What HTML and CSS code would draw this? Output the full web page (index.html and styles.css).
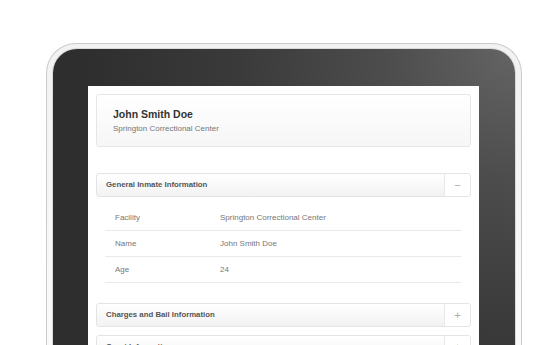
FILE: index.html
```html
<!DOCTYPE html>
<html>
<head>
    <title>Inmate Details</title>
    <link rel="stylesheet" href="styles.css">
</head>
<body>
  <div class="device">
    <div class="bezel">
      <div class="screen">
        <div class="profile">
          <h1 class="profile-name">John Smith Doe</h1>
          <p class="profile-facility">Springton Correctional Center</p>
        </div>

        <div class="panel">
          <div class="panel-head">
            <span class="panel-title">General Inmate Information</span>
            <span class="panel-toggle">&minus;</span>
          </div>
          <div class="panel-body">
            <table class="info-table">
              <tr><td class="label">Facility</td><td>Springton Correctional Center</td></tr>
              <tr><td class="label">Name</td><td>John Smith Doe</td></tr>
              <tr><td class="label">Age</td><td>24</td></tr>
            </table>
          </div>
        </div>

        <div class="panel">
          <div class="panel-head">
            <span class="panel-title">Charges and Bail Information</span>
            <span class="panel-toggle">+</span>
          </div>
        </div>

        <div class="panel">
          <div class="panel-head">
            <span class="panel-title">Court Information</span>
            <span class="panel-toggle">+</span>
          </div>
        </div>
      </div>
    </div>
  </div>
</body>
</html>
```

FILE: styles.css
```css
body {
    margin: 0;
    height: 345px;
    overflow: hidden;
    background: #fff;
    font-family: "Liberation Sans", Arial, sans-serif;
}

.device {
    width: 476px;
    box-sizing: border-box;
    margin: 43px 0 0 46px;
    padding: 5px 6px 0 6px;
    border: 1px solid #cbcbcb;
    border-bottom: none;
    border-radius: 30px 30px 0 0;
    background: linear-gradient(#f2f2f2, #fbfbfb);
}

.bezel {
    padding: 37px 36px 0 35px;
    border-radius: 24px 24px 0 0;
    background: radial-gradient(circle at 100% 0%, #646464 0%, #4d4d4d 22%, #3a3a3a 48%, #2e2e2e 75%);
    box-shadow: 0 0 0 1px #dadada;
}

.screen {
    background: #fff;
    padding: 8px 8px 40px 8px;
}

.profile {
    height: 53px;
    box-sizing: border-box;
    padding: 0 16px;
    border: 1px solid #e6e6e6;
    border-radius: 3px;
    background: linear-gradient(#fff, #f6f6f6);
}

.profile-name {
    margin: 12px 0 0 0;
    font-size: 10.5px;
    line-height: 14px;
    font-weight: bold;
    color: #333;
}

.profile-facility {
    margin: 3px 0 0 0;
    font-size: 8px;
    line-height: 10px;
    color: #777;
}

.panel {
    margin-top: 8px;
}

.profile + .panel {
    margin-top: 26px;
}

.panel-head {
    display: flex;
    height: 24px;
    box-sizing: border-box;
    border: 1px solid #e4e4e4;
    border-radius: 3px;
    background: linear-gradient(#fff, #f2f2f2);
}

.panel-title {
    flex: 1;
    padding-left: 9px;
    font-size: 7.8px;
    line-height: 22px;
    font-weight: bold;
    color: #555;
}

.panel-toggle {
    width: 25px;
    border-left: 1px solid #e8e8e8;
    background: #fff;
    border-radius: 0 3px 3px 0;
    text-align: center;
    font-size: 11px;
    line-height: 22px;
    color: #aaa;
}

.panel-body {
    padding: 8px 10px 12px 9px;
}

.info-table {
    width: 100%;
    border-collapse: collapse;
}

.info-table td {
    height: 25px;
    padding: 0;
    border-bottom: 1px solid #e9e9e9;
    font-size: 8px;
    color: #777;
}

.info-table td.label {
    width: 105px;
    padding-left: 10px;
}
```
